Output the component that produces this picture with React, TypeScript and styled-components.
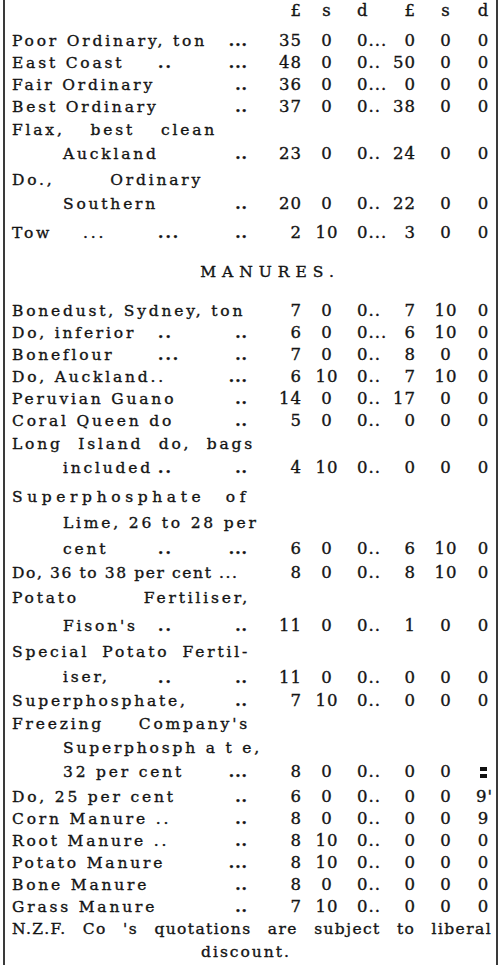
import React from 'react'
import styled, { createGlobalStyle } from 'styled-components'

type Values = [string, string, string, string, string, string]

type Entry = {
  lines: string[]
  values: Values
  mid?: string
  tab?: number
  dots?: string
  lh?: number
  gap?: number
  first?: number
  spread?: number
  tight?: boolean
}

const COLS = '238px 52px 50px 36px 28px 60px 15px'
const INDENT = 51

const fleeces: Entry[] = [
  { lines: ['Poor Ordinary, ton'], dots: '...', values: ['35', '0', '0...', '0', '0', '0'] },
  { lines: ['East Coast'], mid: '..', dots: '...', values: ['48', '0', '0..', '50', '0', '0'] },
  { lines: ['Fair Ordinary'], dots: '..', values: ['36', '0', '0...', '0', '0', '0'] },
  { lines: ['Best Ordinary'], dots: '..', values: ['37', '0', '0..', '38', '0', '0'] },
  {
    lines: ['Flax, best clean', 'Auckland'],
    dots: '..',
    values: ['23', '0', '0..', '24', '0', '0'],
    lh: 24,
    gap: 2,
    first: 205,
  },
  {
    lines: ['Do., Ordinary', 'Southern'],
    dots: '..',
    values: ['20', '0', '0..', '22', '0', '0'],
    lh: 24,
    gap: 6,
    first: 191,
  },
  { lines: ['Tow    ...'], mid: '...', dots: '..', values: ['2', '10', '0...', '3', '0', '0'] },
]

const manures: Entry[] = [
  { lines: ['Bonedust, Sydney, ton'], values: ['7', '0', '0..', '7', '10', '0'] },
  { lines: ['Do, inferior'], mid: '..', dots: '..', values: ['6', '0', '0...', '6', '10', '0'] },
  { lines: ['Boneflour'], mid: '...', dots: '..', values: ['7', '0', '0..', '8', '0', '0'] },
  { lines: ['Do, Auckland..'], dots: '...', values: ['6', '10', '0..', '7', '10', '0'] },
  { lines: ['Peruvian Guano'], dots: '..', values: ['14', '0', '0..', '17', '0', '0'] },
  { lines: ['Coral Queen do'], dots: '..', values: ['5', '0', '0..', '0', '0', '0'] },
  {
    lines: ['Long Island do, bags', 'included'],
    mid: '..',
    dots: '..',
    values: ['4', '10', '0..', '0', '0', '0'],
    lh: 24,
    gap: 4,
    first: 243,
  },
  {
    lines: ['Superphosphate of', 'Lime, 26 to 28 per', 'cent'],
    mid: '..',
    dots: '...',
    values: ['6', '0', '0..', '6', '10', '0'],
    lh: 26,
    spread: 4.6,
  },
  { lines: ['Do, 36 to 38 per cent ...'], tight: true, values: ['8', '0', '0..', '8', '10', '0'] },
  {
    lines: ['Potato Fertiliser,', "Fison's"],
    mid: '..',
    dots: '..',
    values: ['11', '0', '0..', '1', '0', '0'],
    lh: 28,
  },
  {
    lines: ['Special Potato Fertil-', 'iser,'],
    mid: '..',
    dots: '..',
    values: ['11', '0', '0..', '0', '0', '0'],
    lh: 25,
  },
  { lines: ['Superphosphate,'], dots: '..', values: ['7', '10', '0..', '0', '0', '0'] },
  {
    lines: ["Freezing Company's", 'Superphosph a t e,', '32 per cent'],
    dots: '...',
    values: ['8', '0', '0..', '0', '0', '*'],
    lh: 24,
    gap: 2,
  },
  { lines: ['Do, 25 per cent'], dots: '..', values: ['6', '0', '0..', '0', '0', "9'"] },
  { lines: ['Corn Manure ..'], dots: '..', values: ['8', '0', '0..', '0', '0', '9'] },
  { lines: ['Root Manure ..'], dots: '..', values: ['8', '10', '0..', '0', '0', '0'] },
  { lines: ['Potato Manure'], dots: '...', values: ['8', '10', '0..', '0', '0', '0'] },
  { lines: ['Bone Manure'], dots: '..', values: ['8', '0', '0..', '0', '0', '0'] },
  { lines: ['Grass Manure'], dots: '..', values: ['7', '10', '0..', '0', '0', '0'] },
]

const ValueCells: React.FC<{ values: Values }> = ({ values }) => (
  <>
    <Num $align="right">{values[0]}</Num>
    <Num $align="center">{values[1]}</Num>
    <Num $align="left" $pad={5}>{values[2]}</Num>
    <Num $align="right">{values[3]}</Num>
    <Num $align="center">{values[4]}</Num>
    <Num $align="center">
      {values[5] === '*' ? (
        <Smudge>
          <i />
          <i />
        </Smudge>
      ) : (
        values[5]
      )}
    </Num>
  </>
)

const PriceRow: React.FC<{ entry: Entry }> = ({ entry }) => {
  const { lines, mid, dots, values, tight } = entry
  const tab = entry.tab ?? 146
  const last = lines.length - 1
  const indent = last > 0 ? INDENT : 0

  return (
    <Row $lh={entry.lh ?? 22} $gap={entry.gap ?? 0}>
      <Label $tight={tight}>
        {lines.slice(0, last).map((line, i) => (
          <Justified
            key={line}
            $indent={i === 0 ? 0 : INDENT}
            $width={i === 0 ? entry.first ?? 238 : 240}
            $spread={i === 0 ? entry.spread : undefined}
          >
            {line}
          </Justified>
        ))}
        <LastLine $indent={indent}>
          <Text $min={mid ? tab - indent : 0}>{lines[last]}</Text>
          {mid && <Dots>{mid}</Dots>}
          {dots && <EndDots>{dots}</EndDots>}
        </LastLine>
      </Label>
      <ValueCells values={values} />
    </Row>
  )
}

const App: React.FC = () => {
  return (
    <>
      <GlobalStyle />
      <Sheet>
        <HeadRow>
          <span />
          <Num $align="right">£</Num>
          <Num $align="center">s</Num>
          <Num $align="left" $pad={5}>d</Num>
          <Num $align="right">£</Num>
          <Num $align="center">s</Num>
          <Num $align="center">d</Num>
        </HeadRow>

        {fleeces.map((entry) => (
          <PriceRow key={entry.lines[0]} entry={entry} />
        ))}

        <Heading>MANURES.</Heading>

        {manures.map((entry) => (
          <PriceRow key={entry.lines[0]} entry={entry} />
        ))}

        <Note>
          <NoteLine>N.Z.F. Co 's quotations are subject to liberal</NoteLine>
          <NoteEnd>discount.</NoteEnd>
        </Note>
      </Sheet>
    </>
  )
}

const GlobalStyle = createGlobalStyle`
  html, body {
    margin: 0;
    padding: 0;
    background: #ffffff;
  }
  body {
    font-family: "DejaVu Serif", "Liberation Serif", serif;
    color: #141414;
    font-size: 15.5px;
    -webkit-text-stroke: 0.35px #141414;
  }
`

const Sheet = styled.div`
  box-sizing: border-box;
  width: 495px;
  height: 965px;
  overflow: hidden;
  margin-left: 3px;
  padding-left: 7px;
  border-left: 2px solid #3a3a3a;
  border-right: 2px solid #3a3a3a;
`

const Row = styled.div<{ $lh: number; $gap: number }>`
  display: grid;
  grid-template-columns: ${COLS};
  align-items: end;
  line-height: ${(p) => p.$lh}px;
  margin-bottom: ${(p) => p.$gap}px;
`

const HeadRow = styled.div`
  display: grid;
  grid-template-columns: ${COLS};
  line-height: 22px;
  margin-bottom: 8px;
`

const Label = styled.div<{ $tight?: boolean }>`
  display: flex;
  flex-direction: column;
  letter-spacing: ${(p) => (p.$tight ? 1.6 : 2.8)}px;
  white-space: pre;
`

const Justified = styled.div<{ $indent: number; $width: number; $spread?: number }>`
  box-sizing: border-box;
  width: ${(p) => p.$width}px;
  min-width: max-content;
  padding-left: ${(p) => p.$indent}px;
  white-space: normal;
  text-align: justify;
  text-align-last: justify;
  ${(p) => (p.$spread ? `letter-spacing: ${p.$spread}px;` : '')}
`

const LastLine = styled.div<{ $indent: number }>`
  display: flex;
  padding-left: ${(p) => p.$indent}px;
  padding-right: 2px;
`

const Text = styled.span<{ $min: number }>`
  display: inline-block;
  min-width: ${(p) => p.$min}px;
`

const Dots = styled.span`
  font-weight: 700;
  letter-spacing: 2px;
`

const EndDots = styled.span`
  margin-left: auto;
  font-weight: 700;
  letter-spacing: 1px;
`

const Num = styled.div<{ $align: 'left' | 'right' | 'center'; $pad?: number }>`
  text-align: ${(p) => p.$align};
  padding-left: ${(p) => p.$pad ?? 0}px;
  font-size: 16.5px;
  letter-spacing: 1px;
  white-space: nowrap;
`

const Smudge = styled.span`
  display: inline-flex;
  flex-direction: column;
  gap: 3px;
  vertical-align: middle;

  & > i {
    display: block;
    width: 7px;
    height: 4px;
    background: #111;
  }
`

const Heading = styled.div`
  height: 56px;
  display: flex;
  align-items: center;
  justify-content: center;
  padding-left: 32px;
  letter-spacing: 6px;
`

const Note = styled.div`
  width: 480px;
  line-height: 23px;
`

const NoteLine = styled.div`
  text-align: justify;
  text-align-last: justify;
  letter-spacing: 1.4px;
`

const NoteEnd = styled.div`
  text-align: center;
  letter-spacing: 2px;
  padding-right: 12px;
`

export default App
